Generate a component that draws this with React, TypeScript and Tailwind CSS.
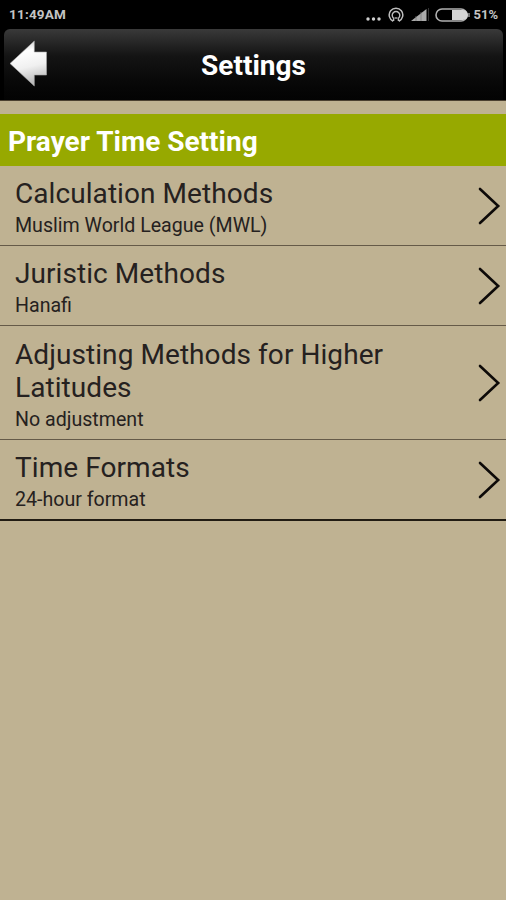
const items = [
  { title: "Calculation Methods", value: "Muslim World League (MWL)", height: "h-20" },
  { title: "Juristic Methods", value: "Hanafi", height: "h-20" },
  { title: "Adjusting Methods for Higher Latitudes", value: "No adjustment", height: "h-[114px]" },
  { title: "Time Formats", value: "24-hour format", height: "h-20" },
];

function StatusBar() {
  return (
    <div className="flex h-[29px] items-center justify-between pr-[8px] pl-[9px] text-[13px] font-bold text-[#c4c4c4]">
      <span className="text-[13.5px] tracking-[0.2px]">11:49AM</span>
      <div className="flex items-center">
        <svg width="17" height="20" viewBox="0 0 17 20" fill="#d0d0d0">
          <circle cx="2" cy="14" r="1.7" />
          <circle cx="7.5" cy="14" r="1.7" />
          <circle cx="13" cy="14" r="1.7" />
        </svg>
        <svg className="ml-[5px]" width="16" height="16" viewBox="0 0 16 16" fill="none" stroke="#bdbdbd">
          <path d="M5.2 14.2A6.8 6.8 0 1 1 10.8 14.2" strokeWidth="1.5" />
          <path d="M5.6 14V11.2M5.6 11.2A3.8 3.8 0 1 1 10.4 11.2M10.4 11.2V14" strokeWidth="1.4" />
          <path d="M6.5 11H9.5" strokeWidth="1.3" />
        </svg>
        <svg className="ml-[7px]" width="19" height="14" viewBox="0 0 19 14">
          <path d="M0 13L15.5 1V13Z" fill="#aaa" />
          <path d="M5 8V13M10 4V13" stroke="#777" strokeWidth="0.7" />
          <path d="M17.5 0V13" stroke="#333" />
        </svg>
        <svg className="ml-[5px]" width="36" height="14" viewBox="0 0 36 14">
          <rect x="1" y="1" width="31" height="12" rx="6" fill="#000" stroke="#b0b0b0" strokeWidth="1.6" />
          <path d="M17 2H28A5 5 0 0 1 28 12H17Z" fill="#d5d5d5" />
          <path d="M34 5V9" stroke="#999" strokeWidth="1.5" />
        </svg>
        <span className="ml-[2px]">51%</span>
      </div>
    </div>
  );
}

function Header() {
  return (
    <header className="flex h-[71px] items-center bg-black pr-[3px] pl-1">
      <div className="relative flex h-full w-full items-center justify-center rounded-t-md bg-linear-to-b from-[#3a3a3a] via-[#141414] via-38% to-[#030303]">
        <svg
          className="absolute top-[9px] left-[4px]"
          width="44"
          height="54"
          viewBox="8 38 44 54"
          aria-label="Back"
        >
          <defs>
            <linearGradient id="arrow" x1="0" y1="0" x2="0.2" y2="1">
              <stop offset="0" stopColor="#bdbdbd" />
              <stop offset="0.3" stopColor="#fff" />
              <stop offset="0.65" stopColor="#f0f0f0" />
              <stop offset="1" stopColor="#bcbcbc" />
            </linearGradient>
          </defs>
          <path d="M10 63.5L34.3 41V52H46.5V75H34.3V86Z" fill="url(#arrow)" stroke="#aaa" strokeWidth="0.6" />
        </svg>
        <h1 className="pt-[2px] text-[28px] font-bold text-white">Settings</h1>
      </div>
    </header>
  );
}

function Chevron() {
  return (
    <svg className="shrink-0" width="24" height="40" viewBox="0 0 24 40" fill="none">
      <path
        d="M3 3L21.2 20L3 37"
        stroke="#0d0a08"
        strokeWidth="2.6"
        strokeLinecap="round"
        strokeLinejoin="miter"
      />
    </svg>
  );
}

export default function App() {
  return (
    <div className="min-h-[900px] w-full bg-[#bfb292] font-['Roboto',sans-serif]">
      <div className="border-b border-[#4b4030] bg-black">
        <StatusBar />
        <Header />
      </div>

      <h2 className="mt-[13px] flex h-[52px] items-center bg-[#97a900] pt-1 pl-2 text-[28px] font-bold text-white">
        Prayer Time Setting
      </h2>

      <ul className="border-b border-[#211c13]">
        {items.map((item) => (
          <li
            key={item.title}
            className={`flex items-center justify-between border-b border-[#655a48] pr-[5px] pl-[15px] last:border-[#211c13] ${item.height}`}
          >
            <div className="w-[400px] pt-[4px] text-[#252120]">
              <div className="text-[28px] leading-[33px] tracking-[0.07px]">{item.title}</div>
              <div className="mt-[4px] text-[19.6px] leading-[24px]">{item.value}</div>
            </div>
            <Chevron />
          </li>
        ))}
      </ul>
    </div>
  );
}
